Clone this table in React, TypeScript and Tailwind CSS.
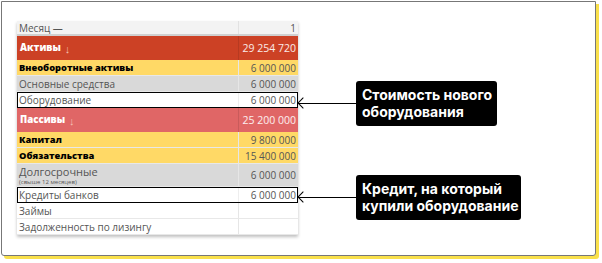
const rows: { label: string; value: string; kind: string; note?: string }[] = [
  { label: "Внеоборотные активы", value: "6 000 000", kind: "yellow" },
  { label: "Основные средства", value: "6 000 000", kind: "gray" },
  { label: "Оборудование", value: "6 000 000", kind: "mark" },
];

const rows2: { label: string; value: string; kind: string; note?: string }[] = [
  { label: "Капитал", value: "9 800 000", kind: "yellow" },
  { label: "Обязательства", value: "15 400 000", kind: "yellow" },
  { label: "Долгосрочные", value: "6 000 000", kind: "gray", note: "(свыше 12 месяцев)" },
  { label: "Кредиты банков", value: "6 000 000", kind: "mark" },
  { label: "Займы", value: "", kind: "white" },
  { label: "Задолженность по лизингу", value: "", kind: "white" },
];

const Row = ({ label, value, kind, note }: { label: string; value: string; kind: string; note?: string }) => {
  if (kind === "mark") {
    return (
      <div className="flex h-4 bg-white border-[1.5px] border-black text-[#555] leading-none whitespace-nowrap">
        <div className="flex-1 flex items-center pl-[1px] border-r border-[#eee]">{label}</div>
        <div className="w-[58px] flex items-center justify-end pr-[1px]">{value}</div>
      </div>
    );
  }
  const bg = kind === "yellow" ? "bg-[#ffd966]" : kind === "gray" ? "bg-[#d9d9d9]" : "bg-white";
  const tc = kind === "yellow" ? "text-black font-extrabold text-[9.3px]" : "text-[#555]";
  return (
    <div className={`flex ${note ? "h-[23px]" : "h-4"} ${bg} border-b border-[#e8e8e8] leading-none whitespace-nowrap`}>
      <div className={`flex-1 flex flex-col justify-center pl-[2px] border-r border-[#e6e6e6] ${tc}`}>
        <span className={note ? "text-[11px] leading-[14px]" : "leading-[12px]"}>{label}</span>
        {note && <span className="text-[6px] leading-[7px]">{note}</span>}
      </div>
      <div className="w-[59px] flex items-center justify-end pr-[2px] text-[#555]">{value}</div>
    </div>
  );
};

const Head = ({ label, value, bg }: { label: string; value: string; bg: string }) => (
  <div className={`flex h-6 ${bg} text-white leading-none whitespace-nowrap`}>
    <div className="flex-1 flex items-center pl-[3px] font-extrabold text-[9.7px] border-r border-black/10">
      {label} <span className="ml-1 font-light text-[11px] text-[#f4c2b5]">↓</span>
    </div>
    <div className="w-[59px] flex items-center justify-end pr-[2px] text-[10.5px] text-white/90">{value}</div>
  </div>
);

const Callout = ({ lines, w }: { lines: string[]; w: string }) => (
  <div className="flex items-center">
    <div className="w-[58px] h-[1.5px] bg-black relative">
      <span className="absolute left-[1px] top-[-4px] w-[8px] h-[8px] border-l-[1.5px] border-b-[1.5px] border-black rotate-45" />
    </div>
    <div className={`${w} h-[45px] bg-black text-white rounded-[3px] px-[6px] pt-[5px] font-bold text-[14px] leading-[17px] whitespace-nowrap`} style={{ fontFamily: "Inter, sans-serif" }}>
      {lines.map((l) => (
        <div key={l}>{l}</div>
      ))}
    </div>
  </div>
);

export default function App() {
  return (
    <div className="w-[602px] h-[263px] bg-white pl-[1px] pt-[1px]">
      <div className="w-[595px] h-[255px] border border-[#777] rounded-b-[3px] bg-white shadow-[3px_3px_0_#f9e04b] flex pt-[19px] pl-[15px]">
        <div className="w-[281px] self-start text-[10px] shadow-[0_2px_3px_rgba(0,0,0,0.25)]" style={{ fontFamily: '"Open Sans", sans-serif' }}>
          <div className="flex h-[15px] bg-[#f3f3f3] text-[#555] leading-none border-b-2 border-[#d0d0d0] whitespace-nowrap">
            <div className="flex-1 flex items-center pl-[2px] border-r border-[#e2e2e2]">Месяц —</div>
            <div className="w-[59px] flex items-center justify-end pr-[2px]">1</div>
          </div>
          <Head label="Активы" value="29 254 720" bg="bg-[#cc4125]" />
          {rows.map((r) => (
            <Row key={r.label} {...r} />
          ))}
          <Head label="Пассивы" value="25 200 000" bg="bg-[#e06666]" />
          {rows2.map((r) => (
            <Row key={r.label} {...r} />
          ))}
        </div>
        <div className="flex flex-col">
          <div className="mt-[60px]">
            <Callout lines={["Стоимость нового", "оборудования"]} w="w-[141px]" />
          </div>
          <div className="mt-[49px]">
            <Callout lines={["Кредит, на который", "купили оборудование"]} w="w-[165px]" />
          </div>
        </div>
      </div>
    </div>
  );
}
